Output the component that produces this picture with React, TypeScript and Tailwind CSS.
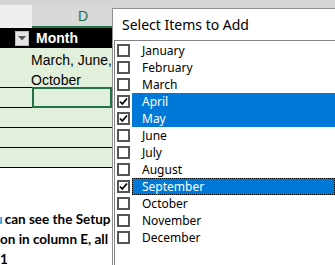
import React from "react";

const MONTHS = [
  "January",
  "February",
  "March",
  "April",
  "May",
  "June",
  "July",
  "August",
  "September",
  "October",
  "November",
  "December",
];

const CHECKED = ["April", "May", "September"];

function CheckBox({ checked }: { checked: boolean }) {
  return (
    <div className="w-[13px] h-[13px] shrink-0 border-2 border-[#555] bg-white flex items-center justify-center">
      {checked && (
        <svg width="9" height="9" viewBox="0 0 9 9">
          <path d="M1 4.5 L3.3 7 L8 1.5" fill="none" stroke="#000" strokeWidth="1.8" />
        </svg>
      )}
    </div>
  );
}

function Sheet() {
  return (
    <div className="w-[112px] shrink-0 bg-white" style={{ fontFamily: "'Liberation Sans', Arial, sans-serif" }}>
      {/* top strip + column header */}
      <div className="h-[5px] bg-[#d4d4d4]" />
      <div className="h-[23px] flex bg-[#efefef]">
        <div className="w-[32px]" />
        <div className="flex-1 bg-[#d8d8d8] border-b-2 border-[#217346] flex items-end justify-center pl-[22px] pb-[3px] text-[14px] leading-none text-[#217346]">
          D
        </div>
      </div>
      {/* table header */}
      <div className="h-[20px] flex bg-black">
        <div className="w-[32px] flex items-center justify-end pr-[3px]">
          <div className="w-[14px] h-[15px] bg-[#e6e6e6] border border-[#bdbdbd] flex items-center justify-center">
            <svg width="8" height="5" viewBox="0 0 8 5">
              <path d="M0 0 H8 L4 4.5 Z" fill="#555" />
            </svg>
          </div>
        </div>
        <div className="flex-1 pl-[4px] text-white font-bold text-[14px] leading-[20px] whitespace-nowrap">
          Month
        </div>
      </div>
      {/* data rows */}
      <div className="bg-[#e2efda] text-[14px] text-black">
        <div className="h-[40px] flex border-b border-black">
          <div className="w-[32px]" />
          <div className="flex-1 pl-[4px] pt-[2px] leading-[20px] whitespace-nowrap">
            <div>March, June,</div>
            <div>October</div>
          </div>
        </div>
        <div className="h-[20px] flex">
          <div className="w-[32px] border-b border-black" />
          <div className="flex-1 border-2 border-[#217346] -mt-px" />
        </div>
        <div className="h-[20px] border-b border-black" />
        <div className="h-[20px] border-b border-black" />
        <div className="h-[20px] border-b border-black" />
      </div>
      <div
        className="pt-[41px] font-bold text-[13.5px] leading-[20px] whitespace-nowrap text-black"
        style={{ fontFamily: "Lato, 'Liberation Sans', sans-serif" }}
      >
        <div>
          <span className="text-[#2e9bd6] -ml-[5px] mr-[2px]">u</span>can see the Setup
        </div>
        <div>on in column E, all</div>
        <div>1</div>
      </div>
    </div>
  );
}

export default function App() {
  return (
    <div className="w-[335px] h-[265px] overflow-hidden flex items-start bg-white">
      <Sheet />
      <div className="relative self-stretch flex-1 min-w-0 flex flex-col pt-[8px] bg-[#d6d6d6]">
        <div
          className="flex-1 flex flex-col bg-white border-l border-t border-[#8f8f8f]"
          style={{ fontFamily: "'Noto Sans', 'Open Sans', sans-serif" }}
        >
          <div className="h-[31px] shrink-0 pl-[9px] flex items-center text-[14px] text-black whitespace-nowrap">
            Select Items to Add
          </div>
          <div className="flex-1 border-t border-l border-[#828282] ml-px pl-[2px] pt-px">
            {MONTHS.map((m) => {
              const checked = CHECKED.includes(m);
              const focus = m === "September";
              return (
                <div key={m} className="h-[17px] flex items-center">
                  <CheckBox checked={checked} />
                  <div
                    className={
                      (checked ? "bg-[#0078d7] text-white " : "text-black ") +
                      (focus ? "border border-dotted border-black pl-[9px] " : "pl-[10px] ") +
                      "ml-[2px] flex-1 h-full flex items-center text-[12px] whitespace-nowrap"
                    }
                  >
                    {m}
                  </div>
                </div>
              );
            })}
          </div>
        </div>
      </div>
    </div>
  );
}
